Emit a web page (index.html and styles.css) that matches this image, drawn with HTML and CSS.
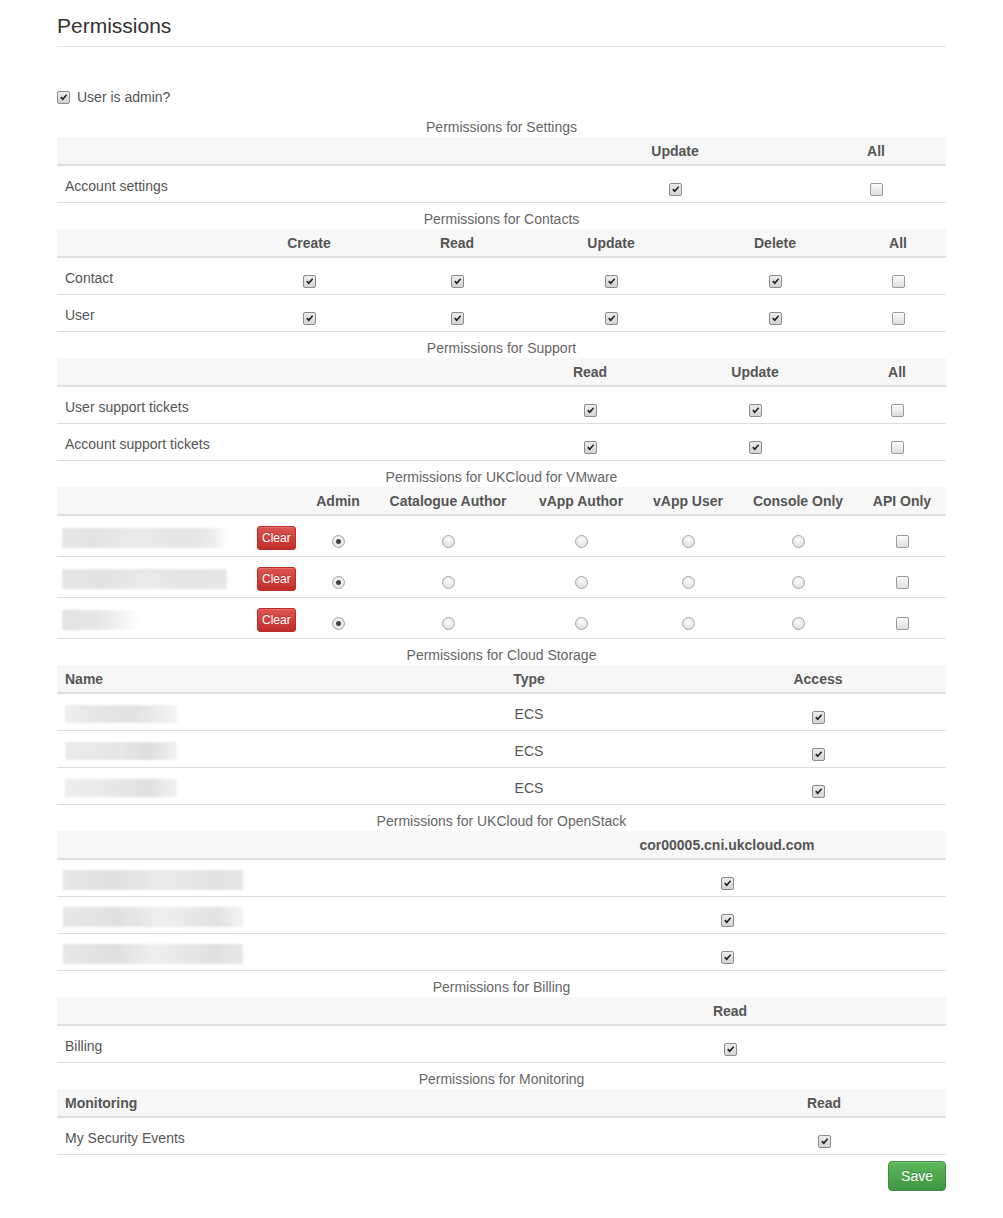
FILE: index.html
```html
<!DOCTYPE html>
<html>
<head>
<meta charset="utf-8">
<title>Permissions</title>
<link rel="stylesheet" href="styles.css">
</head>
<body>
<div class="page">
  <h1 class="title">Permissions</h1>

  <label class="admin"><span class="cb on"><svg viewBox="0 0 13 13"><path d="M2.6 6.8 L4.2 5.4 L5.6 7.2 L9.6 2.6 L10.9 3.8 L5.6 10 Z"/></svg></span>User is admin?</label>

  <table class="perm">
    <caption>Permissions for Settings</caption>
    <colgroup><col class="s1"><col class="s2"><col class="s3"></colgroup>
    <thead><tr><th></th><th>Update</th><th>All</th></tr></thead>
    <tbody>
      <tr><td>Account settings</td><td class="c"><span class="cb on"><svg viewBox="0 0 13 13"><path d="M2.6 6.8 L4.2 5.4 L5.6 7.2 L9.6 2.6 L10.9 3.8 L5.6 10 Z"/></svg></span></td><td class="c"><span class="cb"></span></td></tr>
    </tbody>
  </table>

  <table class="perm">
    <caption>Permissions for Contacts</caption>
    <colgroup><col class="k1"><col class="k2"><col class="k3"><col class="k4"><col class="k5"><col class="k6"></colgroup>
    <thead><tr><th></th><th>Create</th><th>Read</th><th>Update</th><th>Delete</th><th>All</th></tr></thead>
    <tbody>
      <tr><td>Contact</td>
        <td class="c"><span class="cb on"><svg viewBox="0 0 13 13"><path d="M2.6 6.8 L4.2 5.4 L5.6 7.2 L9.6 2.6 L10.9 3.8 L5.6 10 Z"/></svg></span></td>
        <td class="c"><span class="cb on"><svg viewBox="0 0 13 13"><path d="M2.6 6.8 L4.2 5.4 L5.6 7.2 L9.6 2.6 L10.9 3.8 L5.6 10 Z"/></svg></span></td>
        <td class="c"><span class="cb on"><svg viewBox="0 0 13 13"><path d="M2.6 6.8 L4.2 5.4 L5.6 7.2 L9.6 2.6 L10.9 3.8 L5.6 10 Z"/></svg></span></td>
        <td class="c"><span class="cb on"><svg viewBox="0 0 13 13"><path d="M2.6 6.8 L4.2 5.4 L5.6 7.2 L9.6 2.6 L10.9 3.8 L5.6 10 Z"/></svg></span></td>
        <td class="c"><span class="cb"></span></td></tr>
      <tr><td>User</td>
        <td class="c"><span class="cb on"><svg viewBox="0 0 13 13"><path d="M2.6 6.8 L4.2 5.4 L5.6 7.2 L9.6 2.6 L10.9 3.8 L5.6 10 Z"/></svg></span></td>
        <td class="c"><span class="cb on"><svg viewBox="0 0 13 13"><path d="M2.6 6.8 L4.2 5.4 L5.6 7.2 L9.6 2.6 L10.9 3.8 L5.6 10 Z"/></svg></span></td>
        <td class="c"><span class="cb on"><svg viewBox="0 0 13 13"><path d="M2.6 6.8 L4.2 5.4 L5.6 7.2 L9.6 2.6 L10.9 3.8 L5.6 10 Z"/></svg></span></td>
        <td class="c"><span class="cb on"><svg viewBox="0 0 13 13"><path d="M2.6 6.8 L4.2 5.4 L5.6 7.2 L9.6 2.6 L10.9 3.8 L5.6 10 Z"/></svg></span></td>
        <td class="c"><span class="cb"></span></td></tr>
    </tbody>
  </table>

  <table class="perm">
    <caption>Permissions for Support</caption>
    <colgroup><col class="p1"><col class="p2"><col class="p3"><col class="p4"></colgroup>
    <thead><tr><th></th><th>Read</th><th>Update</th><th>All</th></tr></thead>
    <tbody>
      <tr><td>User support tickets</td>
        <td class="c"><span class="cb on"><svg viewBox="0 0 13 13"><path d="M2.6 6.8 L4.2 5.4 L5.6 7.2 L9.6 2.6 L10.9 3.8 L5.6 10 Z"/></svg></span></td>
        <td class="c"><span class="cb on"><svg viewBox="0 0 13 13"><path d="M2.6 6.8 L4.2 5.4 L5.6 7.2 L9.6 2.6 L10.9 3.8 L5.6 10 Z"/></svg></span></td>
        <td class="c"><span class="cb"></span></td></tr>
      <tr><td>Account support tickets</td>
        <td class="c"><span class="cb on"><svg viewBox="0 0 13 13"><path d="M2.6 6.8 L4.2 5.4 L5.6 7.2 L9.6 2.6 L10.9 3.8 L5.6 10 Z"/></svg></span></td>
        <td class="c"><span class="cb on"><svg viewBox="0 0 13 13"><path d="M2.6 6.8 L4.2 5.4 L5.6 7.2 L9.6 2.6 L10.9 3.8 L5.6 10 Z"/></svg></span></td>
        <td class="c"><span class="cb"></span></td></tr>
    </tbody>
  </table>

  <table class="perm vm">
    <caption>Permissions for UKCloud for VMware</caption>
    <colgroup><col class="v1"><col class="v2"><col class="v3"><col class="v4"><col class="v5"><col class="v6"><col class="v7"><col class="v8"></colgroup>
    <thead><tr><th></th><th></th><th>Admin</th><th>Catalogue Author</th><th>vApp Author</th><th>vApp User</th><th>Console Only</th><th>API Only</th></tr></thead>
    <tbody>
      <tr><td class="nm"><div class="blur b-vm1"></div></td><td><button class="btn-clear">Clear</button></td>
        <td class="c"><span class="rd on"></span></td><td class="c"><span class="rd"></span></td><td class="c"><span class="rd"></span></td><td class="c"><span class="rd"></span></td><td class="c"><span class="rd"></span></td><td class="c"><span class="cb"></span></td></tr>
      <tr><td class="nm"><div class="blur b-vm2"></div></td><td><button class="btn-clear">Clear</button></td>
        <td class="c"><span class="rd on"></span></td><td class="c"><span class="rd"></span></td><td class="c"><span class="rd"></span></td><td class="c"><span class="rd"></span></td><td class="c"><span class="rd"></span></td><td class="c"><span class="cb"></span></td></tr>
      <tr><td class="nm"><div class="blur b-vm3"></div></td><td><button class="btn-clear">Clear</button></td>
        <td class="c"><span class="rd on"></span></td><td class="c"><span class="rd"></span></td><td class="c"><span class="rd"></span></td><td class="c"><span class="rd"></span></td><td class="c"><span class="rd"></span></td><td class="c"><span class="cb"></span></td></tr>
    </tbody>
  </table>

  <table class="perm">
    <caption>Permissions for Cloud Storage</caption>
    <colgroup><col class="o1"><col class="o2"><col class="o3"></colgroup>
    <thead><tr><th class="l">Name</th><th>Type</th><th>Access</th></tr></thead>
    <tbody>
      <tr><td><div class="blur b-cs1"></div></td><td class="c">ECS</td><td class="c"><span class="cb on"><svg viewBox="0 0 13 13"><path d="M2.6 6.8 L4.2 5.4 L5.6 7.2 L9.6 2.6 L10.9 3.8 L5.6 10 Z"/></svg></span></td></tr>
      <tr><td><div class="blur b-cs2"></div></td><td class="c">ECS</td><td class="c"><span class="cb on"><svg viewBox="0 0 13 13"><path d="M2.6 6.8 L4.2 5.4 L5.6 7.2 L9.6 2.6 L10.9 3.8 L5.6 10 Z"/></svg></span></td></tr>
      <tr><td><div class="blur b-cs3"></div></td><td class="c">ECS</td><td class="c"><span class="cb on"><svg viewBox="0 0 13 13"><path d="M2.6 6.8 L4.2 5.4 L5.6 7.2 L9.6 2.6 L10.9 3.8 L5.6 10 Z"/></svg></span></td></tr>
    </tbody>
  </table>

  <table class="perm">
    <caption>Permissions for UKCloud for OpenStack</caption>
    <colgroup><col class="os1"><col class="os2"></colgroup>
    <thead><tr><th></th><th>cor00005.cni.ukcloud.com</th></tr></thead>
    <tbody>
      <tr><td class="nm"><div class="blur b-os1"></div></td><td class="c"><span class="cb on"><svg viewBox="0 0 13 13"><path d="M2.6 6.8 L4.2 5.4 L5.6 7.2 L9.6 2.6 L10.9 3.8 L5.6 10 Z"/></svg></span></td></tr>
      <tr><td class="nm"><div class="blur b-os2"></div></td><td class="c"><span class="cb on"><svg viewBox="0 0 13 13"><path d="M2.6 6.8 L4.2 5.4 L5.6 7.2 L9.6 2.6 L10.9 3.8 L5.6 10 Z"/></svg></span></td></tr>
      <tr><td class="nm"><div class="blur b-os3"></div></td><td class="c"><span class="cb on"><svg viewBox="0 0 13 13"><path d="M2.6 6.8 L4.2 5.4 L5.6 7.2 L9.6 2.6 L10.9 3.8 L5.6 10 Z"/></svg></span></td></tr>
    </tbody>
  </table>

  <table class="perm">
    <caption>Permissions for Billing</caption>
    <colgroup><col class="bi1"><col class="bi2"></colgroup>
    <thead><tr><th></th><th>Read</th></tr></thead>
    <tbody>
      <tr><td>Billing</td><td class="c"><span class="cb on"><svg viewBox="0 0 13 13"><path d="M2.6 6.8 L4.2 5.4 L5.6 7.2 L9.6 2.6 L10.9 3.8 L5.6 10 Z"/></svg></span></td></tr>
    </tbody>
  </table>

  <table class="perm">
    <caption>Permissions for Monitoring</caption>
    <colgroup><col class="m1"><col class="m2"></colgroup>
    <thead><tr><th class="l">Monitoring</th><th>Read</th></tr></thead>
    <tbody>
      <tr><td>My Security Events</td><td class="c"><span class="cb on"><svg viewBox="0 0 13 13"><path d="M2.6 6.8 L4.2 5.4 L5.6 7.2 L9.6 2.6 L10.9 3.8 L5.6 10 Z"/></svg></span></td></tr>
    </tbody>
  </table>

  <div class="actions"><button class="btn-save">Save</button></div>
</div>
</body>
</html>
```

FILE: styles.css
```css
html, body {
  margin: 0;
  padding: 0;
  background: #fff;
}
body {
  font-family: "Liberation Sans", Arial, Helvetica, sans-serif;
  font-size: 14px;
  line-height: 20px;
  color: #555;
}
.page {
  width: 889px;
  margin-left: 57px;
  padding-bottom: 28px;
}
.title {
  margin: 0;
  padding: 14px 0 8px;
  font-size: 21px;
  line-height: 24px;
  font-weight: normal;
  color: #333;
  border-bottom: 1px solid #e5e5e5;
}
.admin {
  display: flex;
  align-items: center;
  margin-top: 40px;
  height: 20px;
  color: #555;
}
.admin .cb {
  margin-right: 7px;
  vertical-align: middle;
}

/* checkbox */
.cb {
  display: inline-block;
  box-sizing: border-box;
  width: 13px;
  height: 13px;
  border: 1px solid #9a9a9a;
  border-radius: 2px;
  background: linear-gradient(#fbfbfb, #dedede);
  vertical-align: -5px;
  position: relative;
}
.cb.on {
  background: linear-gradient(#ececec, #d4d4d4);
  border-color: #8c8c8c;
}
.cb svg {
  display: block;
  width: 11px;
  height: 11px;
}
.cb svg path {
  fill: #222;
}

/* radio */
.rd {
  display: inline-block;
  box-sizing: border-box;
  width: 13px;
  height: 13px;
  border: 1px solid #a8a8a8;
  border-radius: 50%;
  background: radial-gradient(circle at 50% 35%, #fdfdfd, #d8d8d8);
  vertical-align: -5px;
  position: relative;
}
.rd.on::after {
  content: "";
  position: absolute;
  left: 3px;
  top: 3px;
  width: 5px;
  height: 5px;
  border-radius: 50%;
  background: #444;
}

/* tables */
.perm {
  width: 889px;
  border-collapse: collapse;
  table-layout: fixed;
}
.perm caption {
  padding: 10px 0 0;
  line-height: 20px;
  color: #666;
  text-align: center;
}
.perm + .perm caption {
  padding-top: 6px;
}
.perm th {
  background: #f7f7f7;
  padding: 4px 8px 3px;
  line-height: 20px;
  font-weight: bold;
  color: #555;
  text-align: center;
  border-bottom: 2px solid #e0e0e0;
  white-space: nowrap;
}
.perm th.l {
  text-align: left;
}
.perm td {
  padding: 10px 8px 6px;
  line-height: 20px;
  border-bottom: 1px solid #dddddd;
  vertical-align: middle;
  color: #555;
}
.perm td.c {
  text-align: center;
}
.perm td.nm {
  padding-left: 5px;
}

/* column widths */
.s1 { width: 487px; } .s2 { width: 262px; } .s3 { width: 140px; }
.k1 { width: 169px; } .k2 { width: 166px; } .k3 { width: 130px; } .k4 { width: 178px; } .k5 { width: 150px; } .k6 { width: 96px; }
.p1 { width: 461px; } .p2 { width: 144px; } .p3 { width: 186px; } .p4 { width: 98px; }
.v1 { width: 192px; } .v2 { width: 55px; } .v3 { width: 68px; } .v4 { width: 152px; } .v5 { width: 114px; } .v6 { width: 100px; } .v7 { width: 120px; } .v8 { width: 88px; }
.o1 { width: 311px; } .o2 { width: 322px; } .o3 { width: 256px; }
.os1 { width: 451px; } .os2 { width: 438px; }
.bi1 { width: 457px; } .bi2 { width: 432px; }
.m1 { width: 645px; } .m2 { width: 244px; }

/* blurred names */
.blur {
  height: 20px;
  filter: blur(1px);
}
.b-vm1 {
  width: 165px;
  background: linear-gradient(90deg, #e6e6e6 0%, #e2e2e2 20%, #ececec 45%, #e4e4e4 75%, #ededed 92%, #fff 100%);
}
.b-vm2 {
  width: 165px;
  background: linear-gradient(90deg, #e6e6e6 0%, #e1e1e1 25%, #ebebeb 50%, #e3e3e3 80%, #e8e8e8 100%);
}
.b-vm3 {
  width: 78px;
  background: linear-gradient(90deg, #e3e3e3 0%, #e6e6e6 45%, #f5f5f5 80%, #fff 100%);
}
.b-cs1, .b-cs2, .b-cs3 {
  width: 112px;
  height: 18px;
}
.b-cs1 { background: linear-gradient(90deg, #eeeeee 0%, #e4e4e4 40%, #e2e2e2 60%, #f4f4f4 100%); }
.b-cs2 { background: linear-gradient(90deg, #ececec 0%, #e6e6e6 50%, #dedede 75%, #f2f2f2 100%); }
.b-cs3 { background: linear-gradient(90deg, #eeeeee 0%, #e8e8e8 40%, #e0e0e0 75%, #f2f2f2 100%); }
.b-os1, .b-os2, .b-os3 {
  width: 180px;
  margin-left: 1px;
}
.b-os1 { background: linear-gradient(90deg, #e6e6e6 0%, #e0e0e0 30%, #ececec 55%, #e2e2e2 85%, #e6e6e6 100%); }
.b-os2 { background: linear-gradient(90deg, #e8e8e8 0%, #e0e0e0 30%, #efefef 55%, #e2e2e2 85%, #f4f4f4 100%); }
.b-os3 { background: linear-gradient(90deg, #e6e6e6 0%, #dfdfdf 30%, #efefef 50%, #e0e0e0 85%, #e8e8e8 100%); }

/* buttons */
.btn-clear {
  font-family: "Liberation Sans", Arial, sans-serif;
  font-size: 12px;
  line-height: 18px;
  padding: 2px 4px;
  color: #fff;
  background: linear-gradient(#de5450, #c12e2a);
  border: 1px solid #b92c28;
  border-radius: 3px;
  display: block;
  box-shadow: inset 0 1px 0 rgba(255,255,255,0.15);
  text-shadow: 0 -1px 0 rgba(0,0,0,0.2);
  cursor: pointer;
}
.actions {
  display: flex;
  justify-content: flex-end;
  margin-top: 6px;
}
.btn-save {
  font-family: "Liberation Sans", Arial, sans-serif;
  font-size: 14px;
  line-height: 20px;
  padding: 4px 12px;
  color: #fff;
  background: linear-gradient(#5cb85c, #419641);
  border: 1px solid #3e8f3e;
  border-radius: 4px;
  box-shadow: inset 0 1px 0 rgba(255,255,255,0.15);
  text-shadow: 0 -1px 0 rgba(0,0,0,0.2);
  cursor: pointer;
}
```
